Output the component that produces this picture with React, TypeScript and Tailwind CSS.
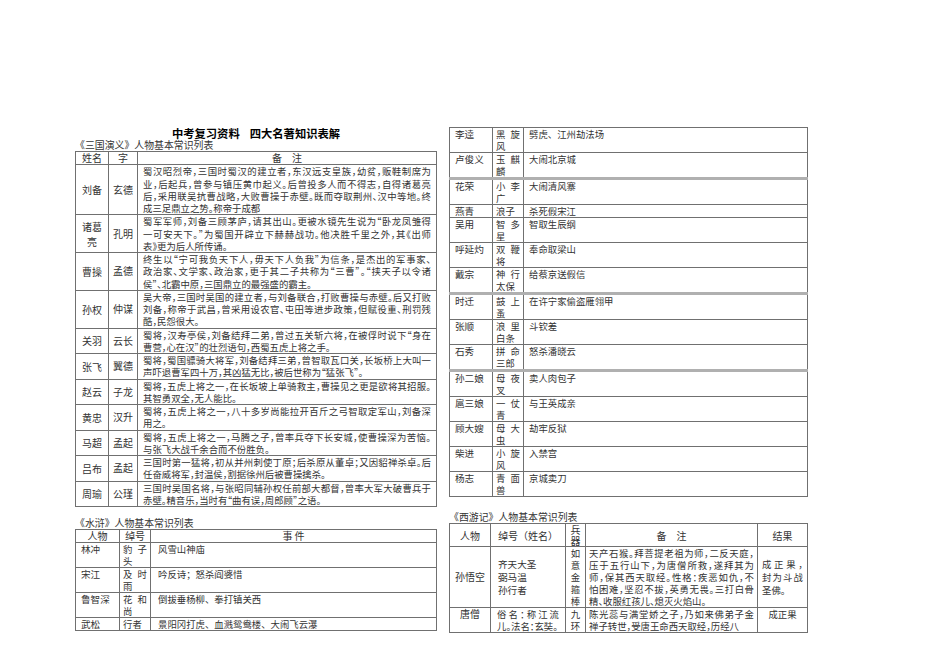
import React from 'react';

type SgRow = { name: string; zi: string; lines: string[] };
type ShRow = { name: string; hao: string; event: string; thick?: boolean };

const sanguo: SgRow[] = [
  {
    name: '刘备',
    zi: '玄德',
    lines: [
      '蜀汉昭烈帝，三国时蜀汉的建立者，东汉远支皇族，幼贫，贩鞋制席为',
      '业，后起兵，曾参与镇压黄巾起义。后曾投多人而不得志，自得诸葛亮',
      '后，采用联吴抗曹战略，大败曹操于赤壁。既而夺取荆州、汉中等地。终',
      '成三足鼎立之势。称帝于成都',
    ],
  },
  {
    name: '诸葛亮',
    zi: '孔明',
    lines: [
      '蜀军军师，刘备三顾茅庐，请其出山。更被水镜先生说为“卧龙凤雏得',
      '一可安天下。”为蜀国开辟立下赫赫战功。他决胜千里之外，其《出师',
      '表》更为后人所传诵。',
    ],
  },
  {
    name: '曹操',
    zi: '孟德',
    lines: [
      '终生以“宁可我负天下人，毋天下人负我”为信条，是杰出的军事家、',
      '政治家、文学家、政治家，更于其二子共称为“三曹”。“挟天子以令诸',
      '侯”、北霸中原，三国鼎立的最强盛的霸主。',
    ],
  },
  {
    name: '孙权',
    zi: '仲谋',
    lines: [
      '吴大帝，三国时吴国的建立者，与刘备联合，打败曹操与赤壁。后又打败',
      '刘备，称帝于武昌，曾采用设农官、屯田等进步政策，但赋役重、刑罚残',
      '酷，民怨很大。',
    ],
  },
  {
    name: '关羽',
    zi: '云长',
    lines: [
      '蜀将，汉寿亭侯，刘备结拜二弟，曾过五关斩六将，在被俘时说下“身在',
      '曹营，心在汉”的壮烈语句，西蜀五虎上将之手。',
    ],
  },
  {
    name: '张飞',
    zi: '翼德',
    lines: [
      '蜀将，蜀国骠骑大将军，刘备结拜三弟，曾智取瓦口关，长坂桥上大叫一',
      '声吓退曹军四十万，其凶猛无比，被后世称为“猛张飞”。',
    ],
  },
  {
    name: '赵云',
    zi: '子龙',
    lines: [
      '蜀将，五虎上将之一，在长坂坡上单骑救主，曹操见之更是欲将其招服。',
      '其智勇双全，无人能比。',
    ],
  },
  {
    name: '黄忠',
    zi: '汉升',
    lines: ['蜀将，五虎上将之一，八十多岁尚能拉开百斤之弓智取定军山，刘备深', '用之。'],
  },
  {
    name: '马超',
    zi: '孟起',
    lines: [
      '蜀将，五虎上将之一，马腾之子，曾率兵夺下长安城，使曹操深为苦恼。',
      '与张飞大战千余合而不份胜负。',
    ],
  },
  {
    name: '吕布',
    zi: '孟起',
    lines: [
      '三国时第一猛将，初从并州刺使丁原；后杀原从董卓；又因貂禅杀卓。后',
      '任奋威将军，封温侯，割据徐州后被曹操擒杀。',
    ],
  },
  {
    name: '周瑜',
    zi: '公瑾',
    lines: [
      '三国时吴国名将，与张昭同辅孙权任前部大都督，曾率大军大破曹兵于',
      '赤壁。精音乐，当时有“曲有误，周郎顾”之语。',
    ],
  },
];

const shuihuLeft: ShRow[] = [
  { name: '林冲', hao: '豹子头', event: '风雪山神庙' },
  { name: '宋江', hao: '及时雨', event: '吟反诗；怒杀阎婆惜' },
  { name: '鲁智深', hao: '花和尚', event: '倒拔垂杨柳、拳打镇关西' },
  { name: '武松', hao: '行者', event: '景阳冈打虎、血溅鸳鸯楼、大闹飞云瀑' },
];

const shuihuRight: ShRow[] = [
  { name: '李逵', hao: '黑旋风', event: '劈虎、江州劫法场' },
  { name: '卢俊义', hao: '玉麒麟', event: '大闹北京城', thick: true },
  { name: '花荣', hao: '小李广', event: '大闹清风寨' },
  { name: '燕青', hao: '浪子', event: '杀死假宋江' },
  { name: '吴用', hao: '智多星', event: '智取生辰纲' },
  { name: '呼延灼', hao: '双鞭将', event: '奉命取梁山' },
  { name: '戴宗', hao: '神行太保', event: '给蔡京送假信', thick: true },
  { name: '时迁', hao: '鼓上蚤', event: '在许宁家偷盗雁翎甲' },
  { name: '张顺', hao: '浪里白条', event: '斗钦差' },
  { name: '石秀', hao: '拼命三郎', event: '怒杀潘晓云', thick: true },
  { name: '孙二娘', hao: '母夜叉', event: '卖人肉包子' },
  { name: '扈三娘', hao: '一仗青', event: '与王英成亲' },
  { name: '顾大嫂', hao: '母大虫', event: '劫牢反狱' },
  { name: '柴进', hao: '小旋风', event: '入禁宫' },
  { name: '杨志', hao: '青面兽', event: '京城卖刀' },
];

// justified lines, last one left aligned like a printed paragraph
function Para({ lines }: { lines: string[] }) {
  return (
    <>
      {lines.map((l, i) =>
        i < lines.length - 1 ? (
          <div key={i} className="text-justify [text-align-last:justify] [font-feature-settings:'halt']">
            {l}
          </div>
        ) : (
          <div key={i} className="[font-feature-settings:'halt']">
            {l}
          </div>
        )
      )}
    </>
  );
}

const td = 'border border-[#707070] p-0';

function ShuihuTable({ rows, header, widths, eventPad }: { rows: ShRow[]; header: boolean; widths: [string, string, string]; eventPad: string }) {
  return (
    <table className="w-full table-fixed border-collapse text-[9.4px] leading-[12px]">
      <colgroup>
        <col className={widths[0]} />
        <col className={widths[1]} />
        <col className={widths[2]} />
      </colgroup>
      <tbody>
        {header && (
          <tr>
            <td className={`${td} text-center text-[10px]`}>人物</td>
            <td className={`${td} text-center text-[10px]`}>绰号</td>
            <td className={`${td} text-center text-[10px]`}>事 件</td>
          </tr>
        )}
        {rows.map((r) => (
          <tr key={r.name} className={r.thick ? 'border-b-[3px] border-b-[#b0b0b0]' : ''}>
            <td className={`${td} px-[5px] align-top text-[9.6px]`}>{r.name}</td>
            <td className={`${td} px-[3px] align-top text-justify`}>{r.hao}</td>
            <td className={`${td} ${eventPad} align-top`}>{r.event}</td>
          </tr>
        ))}
      </tbody>
    </table>
  );
}

export default function App() {
  return (
    <div className="min-h-[672px] w-[950px] bg-white font-['Noto_Sans_CJK_SC','Noto_Sans',sans-serif] text-[#333]">
      <div className="flex gap-[12px] pl-[75px] pt-[126px]">
        {/* left column */}
        <div className="w-[362px] shrink-0">
          <h1 className="flex justify-center gap-[10px] text-[11.3px] font-bold leading-[14px] text-black">
            <span>中考复习资料</span>
            <span>四大名著知识表解</span>
          </h1>
          <p className="text-[9.9px] leading-[11px]">《三国演义》人物基本常识列表</p>
          <table className="w-full table-fixed border-collapse text-[9.4px] leading-[12.25px]">
            <colgroup>
              <col className="w-[33px]" />
              <col className="w-[29px]" />
              <col />
            </colgroup>
            <tbody>
              <tr>
                <td className={`${td} text-center text-[10px]`}>姓名</td>
                <td className={`${td} text-center text-[10px]`}>字</td>
                <td className={`${td} text-center text-[10px]`}>备　注</td>
              </tr>
              {sanguo.map((r) => (
                <tr key={r.name}>
                  <td className={`${td} px-[3px] text-center align-middle text-[10px] leading-[15px]`}>{r.name}</td>
                  <td className={`${td} text-center align-middle text-[10px]`}>{r.zi}</td>
                  <td className={`${td} px-[5px]`}>
                    <Para lines={r.lines} />
                  </td>
                </tr>
              ))}
            </tbody>
          </table>

          <p className="mt-[10px] text-[9.9px] leading-[12px]">《水浒》人物基本常识列表</p>
          <ShuihuTable rows={shuihuLeft} header widths={['w-[44px]', 'w-[31px]', '']} eventPad="pl-[7px] pr-[5px]" />
        </div>

        {/* right column */}
        <div className="w-[359px] shrink-0 pt-[1px]">
          <ShuihuTable rows={shuihuRight} header={false} widths={['w-[43px]', 'w-[31px]', '']} eventPad="px-[5px]" />

          <p className="mt-[14px] text-[9.9px] leading-[12px]">《西游记》人物基本常识列表</p>
          <table className="w-full table-fixed border-collapse text-[9.4px] leading-[12px]">
            <colgroup>
              <col className="w-[41px]" />
              <col className="w-[75px]" />
              <col className="w-[20px]" />
              <col className="w-[172px]" />
              <col />
            </colgroup>
            <tbody>
              <tr>
                <td className={`${td} text-center align-middle text-[10px] leading-[11px]`}>人物</td>
                <td className={`${td} text-center align-middle text-[10px] leading-[11px]`}>绰号（姓名）</td>
                <td className={`${td} px-[3px] text-center align-middle text-[10px] leading-[11px]`}>兵器</td>
                <td className={`${td} text-center align-middle text-[10px] leading-[11px]`}>备　注</td>
                <td className={`${td} text-center align-middle text-[10px] leading-[11px]`}>结果</td>
              </tr>
              <tr>
                <td className={`${td} text-center align-middle text-[10px]`}>孙悟空</td>
                <td className={`${td} pl-[7px] align-middle text-[9.6px] leading-[13px]`}>
                  <div>齐天大圣</div>
                  <div>弼马温</div>
                  <div>孙行者</div>
                </td>
                <td className={`${td} px-[3px] text-center align-middle`}>如意金箍棒</td>
                <td className={`${td} px-[3px] align-middle`}>
                  <Para
                    lines={[
                      '天产石猴。拜菩提老祖为师，二反天庭，',
                      '压于五行山下，为唐僧所救，遂拜其为',
                      '师，保其西天取经。性格：疾恶如仇，不',
                      '怕困难，坚忍不拔，英勇无畏。三打白骨',
                      '精、收服红孩儿、熄灭火焰山。',
                    ]}
                  />
                </td>
                <td className={`${td} px-[4px] align-middle leading-[13px]`}>
                  <Para lines={['成正果，', '封为斗战', '圣佛。']} />
                </td>
              </tr>
              <tr>
                <td className={`${td} text-center align-top text-[10px]`}>唐僧</td>
                <td className={`${td} px-[6px] align-top`}>
                  <Para lines={['俗名：称江流', '儿。法名：玄奘。']} />
                </td>
                <td className={`${td} px-[3px] text-center align-top`}>九环</td>
                <td className={`${td} px-[3px] align-top`}>
                  <Para lines={['陈光蕊与满堂娇之子，乃如来佛弟子金', '禅子转世，受唐王命西天取经，历经八']} />
                </td>
                <td className={`${td} text-center align-top`}>成正果</td>
              </tr>
            </tbody>
          </table>
        </div>
      </div>
    </div>
  );
}
